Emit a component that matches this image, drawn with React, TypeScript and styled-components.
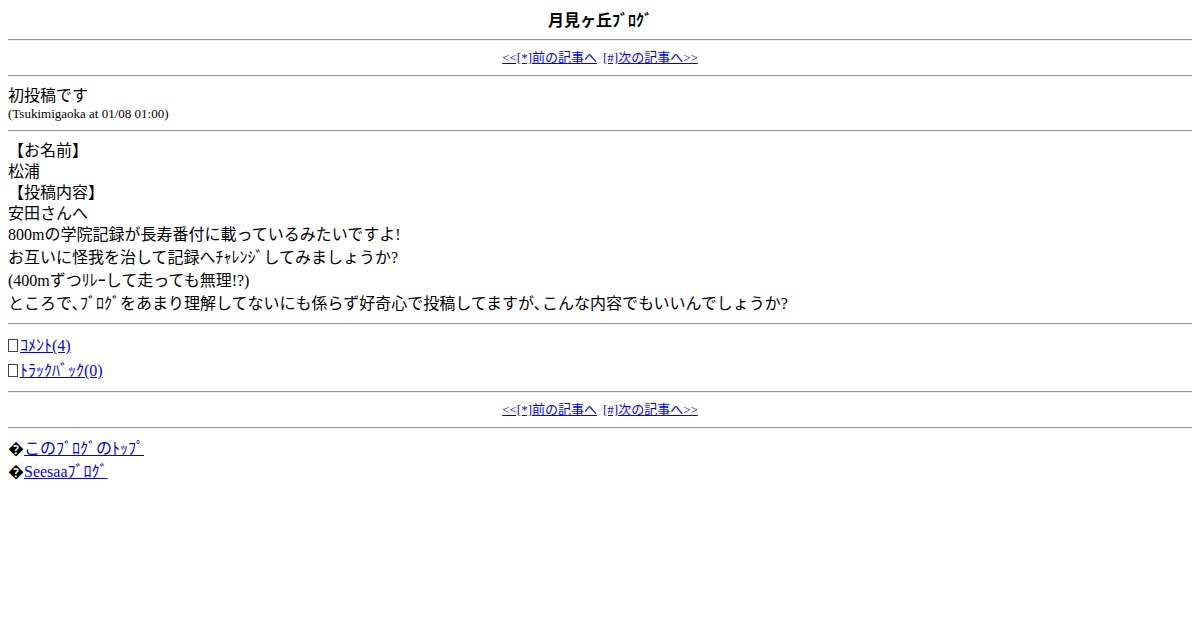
import React from 'react';
import styled, { createGlobalStyle } from 'styled-components';

const GlobalStyle = createGlobalStyle`
    body {
        margin: 8px;
        background: #ffffff;
        color: #000000;
        font-family: "Liberation Serif", "Noto Sans CJK JP", serif;
        font-size: 16px;
    }
`;

const Title = styled.div`
    text-align: center;
    font-family: "Noto Sans CJK JP", sans-serif;
    font-weight: bold;
    font-size: 16px;
    line-height: 23px;
`;

const Rule = styled.hr`
    margin: 8px 0;
    border: none;
    border-top: 1px solid #9a9a9a;
    border-bottom: 1px solid #eeeeee;
`;

const Nav = styled.div`
    text-align: center;
    font-size: 13px;
    line-height: 18px;
`;

const Link = styled.a`
    color: #0000ee;
    text-decoration: underline;
`;

const NavGap = styled.span`
    display: inline-block;
    width: 6px;
`;

const PostTitle = styled.div`
    font-size: 16px;
    line-height: 21px;
`;

const Meta = styled.div`
    font-size: 13px;
    line-height: 16px;
`;

const Body = styled.div`
    font-size: 16px;
`;

const Line = styled.div<{ $h: number }>`
    line-height: ${(p) => p.$h}px;
`;

const ItemList = styled.div`
    font-size: 16px;
`;

const Item = styled.div<{ $h: number }>`
    line-height: ${(p) => p.$h}px;
`;

const Box = styled.span`
    display: inline-block;
    width: 8px;
    height: 11px;
    border: 1px solid #444444;
    margin-right: 2px;
    vertical-align: -1px;
`;

const Footer = styled.div`
    font-size: 16px;
`;

const navRow = (
    <Nav>
        <Link href="#">&lt;&lt;[*]前の記事へ</Link>
        <NavGap />
        <Link href="#">[#]次の記事へ&gt;&gt;</Link>
    </Nav>
);

const lines: [string, number][] = [
    ['【お名前】', 21],
    ['松浦', 21],
    ['【投稿内容】', 21],
    ['安田さんへ', 21],
    ['800mの学院記録が長寿番付に載っているみたいですよ!', 22],
    ['お互いに怪我を治して記録へﾁｬﾚﾝｼﾞしてみましょうか?', 23],
    ['(400mずつﾘﾚｰして走っても無理!?)', 23],
    ['ところで､ﾌﾞﾛｸﾞをあまり理解してないにも係らず好奇心で投稿してますが､こんな内容でもいいんでしょうか?', 23],
];

export default function App() {
    return (
        <>
            <GlobalStyle />
            <Title>月見ヶ丘ﾌﾞﾛｸﾞ</Title>
            <Rule />
            {navRow}
            <Rule />
            <PostTitle>初投稿です</PostTitle>
            <Meta>(Tsukimigaoka at 01/08 01:00)</Meta>
            <Rule />
            <Body>
                {lines.map(([text, h], i) => (
                    <Line key={i} $h={h}>
                        {text}
                    </Line>
                ))}
            </Body>
            <Rule />
            <ItemList>
                <Item $h={25}>
                    <Box />
                    <Link href="#">ｺﾒﾝﾄ(4)</Link>
                </Item>
                <Item $h={25}>
                    <Box />
                    <Link href="#">ﾄﾗｯｸﾊﾞｯｸ(0)</Link>
                </Item>
            </ItemList>
            <Rule />
            {navRow}
            <Rule />
            <Footer>
                <Item $h={23}>
                    {'\uFFFD'}
                    <Link href="#">このﾌﾞﾛｸﾞのﾄｯﾌﾟ</Link>
                </Item>
                <Item $h={23}>
                    {'\uFFFD'}
                    <Link href="#">Seesaaﾌﾞﾛｸﾞ</Link>
                </Item>
            </Footer>
        </>
    );
}
